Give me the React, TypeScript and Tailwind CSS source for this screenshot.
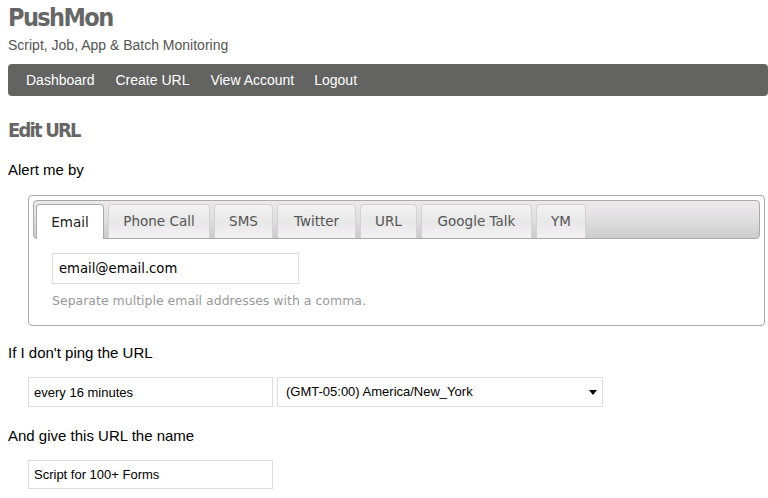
const tabs = ["Email", "Phone Call", "SMS", "Twitter", "URL", "Google Talk", "YM"];

const tabWidths: Record<string, string> = {
  Email: "w-[68px]",
  "Phone Call": "w-[102px]",
  SMS: "w-[59px]",
  Twitter: "w-[79px]",
  URL: "w-[57px]",
  "Google Talk": "w-[111px]",
  YM: "w-[50px]",
};

export default function App() {
  return (
    <div className="min-h-[498px] bg-white pl-2 font-['Liberation_Sans',Arial,sans-serif] text-[#222]">
      <header className="pt-[3px]">
        <h1 className="text-[25px] leading-[30px] font-bold text-[#666] tracking-[-1.6px] font-['DejaVu_Sans_Condensed','DejaVu_Sans',sans-serif]">
          PushMon
        </h1>
        <p className="mt-[4px] text-[14px] leading-[16px] text-[#555]">
          Script, Job, App &amp; Batch Monitoring
        </p>
      </header>

      <nav className="mt-[11px] flex h-[32px] items-center rounded-[4px] bg-[#636361] pl-[18px] text-[14px] text-white">
        <a className="mr-[21px]">Dashboard</a>
        <a className="mr-[21px]">Create URL</a>
        <a className="mr-[20px]">View Account</a>
        <a>Logout</a>
      </nav>

      <h2 className="mt-[22px] text-[20px] leading-[24px] font-bold text-[#666] tracking-[-1.8px] font-['DejaVu_Sans_Condensed','DejaVu_Sans',sans-serif]">
        Edit URL
      </h2>

      <p className="mt-[19px] text-[15px] leading-[18px] text-black">Alert me by</p>

      <div className="mt-[16px] ml-[20px] mr-[3px] h-[131px] rounded-[4px] border border-[#aaa] p-[4px]">
        <div className="flex h-[39px] items-end gap-[4px] rounded-[4px] border border-[#aaa] bg-gradient-to-b from-[#ece9eb] via-[#e0dfe0] to-[#cccccc] pl-[2px]">
          {tabs.map((t, i) => (
            <div
              key={t}
              className={`${tabWidths[t]} flex h-[34px] items-center justify-center rounded-t-[4px] border border-b-0 font-['DejaVu_Sans',Verdana,sans-serif] text-[13.5px] ${
                i === 0
                  ? "relative -mb-px h-[35px] border-[#aaa] bg-white text-[#222]"
                  : "border-[#d3d3d3] bg-gradient-to-b from-[#f3f2f3] via-[#e8e8e8] to-[#f4f0f4] text-[#555]"
              }`}
            >
              {t}
            </div>
          ))}
        </div>
        <div className="px-[19px] pt-[14px]">
          <input
            readOnly
            value="email@email.com"
            className="h-[31px] w-[247px] border border-[#ddd] px-[6px] font-['DejaVu_Sans',Verdana,sans-serif] text-[13.2px] text-black outline-none"
          />
          <p className="mt-[9px] font-['DejaVu_Sans',Verdana,sans-serif] text-[12.5px] leading-[15px] text-[#999]">
            Separate multiple email addresses with a comma.
          </p>
        </div>
      </div>

      <p className="mt-[18px] text-[15px] leading-[18px] text-black">If I don&apos;t ping the URL</p>

      <div className="mt-[15px] ml-[20px] flex gap-[4px]">
        <input
          readOnly
          value="every 16 minutes"
          className="h-[30px] w-[245px] border border-[#ddd] px-[5px] text-[13px] text-black outline-none"
        />
        <div className="flex h-[30px] w-[326px] items-center justify-between border border-[#ddd] pl-[8px] pr-[5px] text-[13px] text-black">
          <span>(GMT-05:00) America/New_York</span>
          <svg width="8" height="5" viewBox="0 0 8 5">
            <path d="M0 0h8L4 5z" fill="#000" />
          </svg>
        </div>
      </div>

      <p className="mt-[20px] text-[15px] leading-[18px] text-black">And give this URL the name</p>

      <div className="mt-[15px] ml-[20px]">
        <input
          readOnly
          value="Script for 100+ Forms"
          className="h-[29px] w-[245px] border border-[#ddd] px-[5px] text-[13px] text-black outline-none"
        />
      </div>
    </div>
  );
}
